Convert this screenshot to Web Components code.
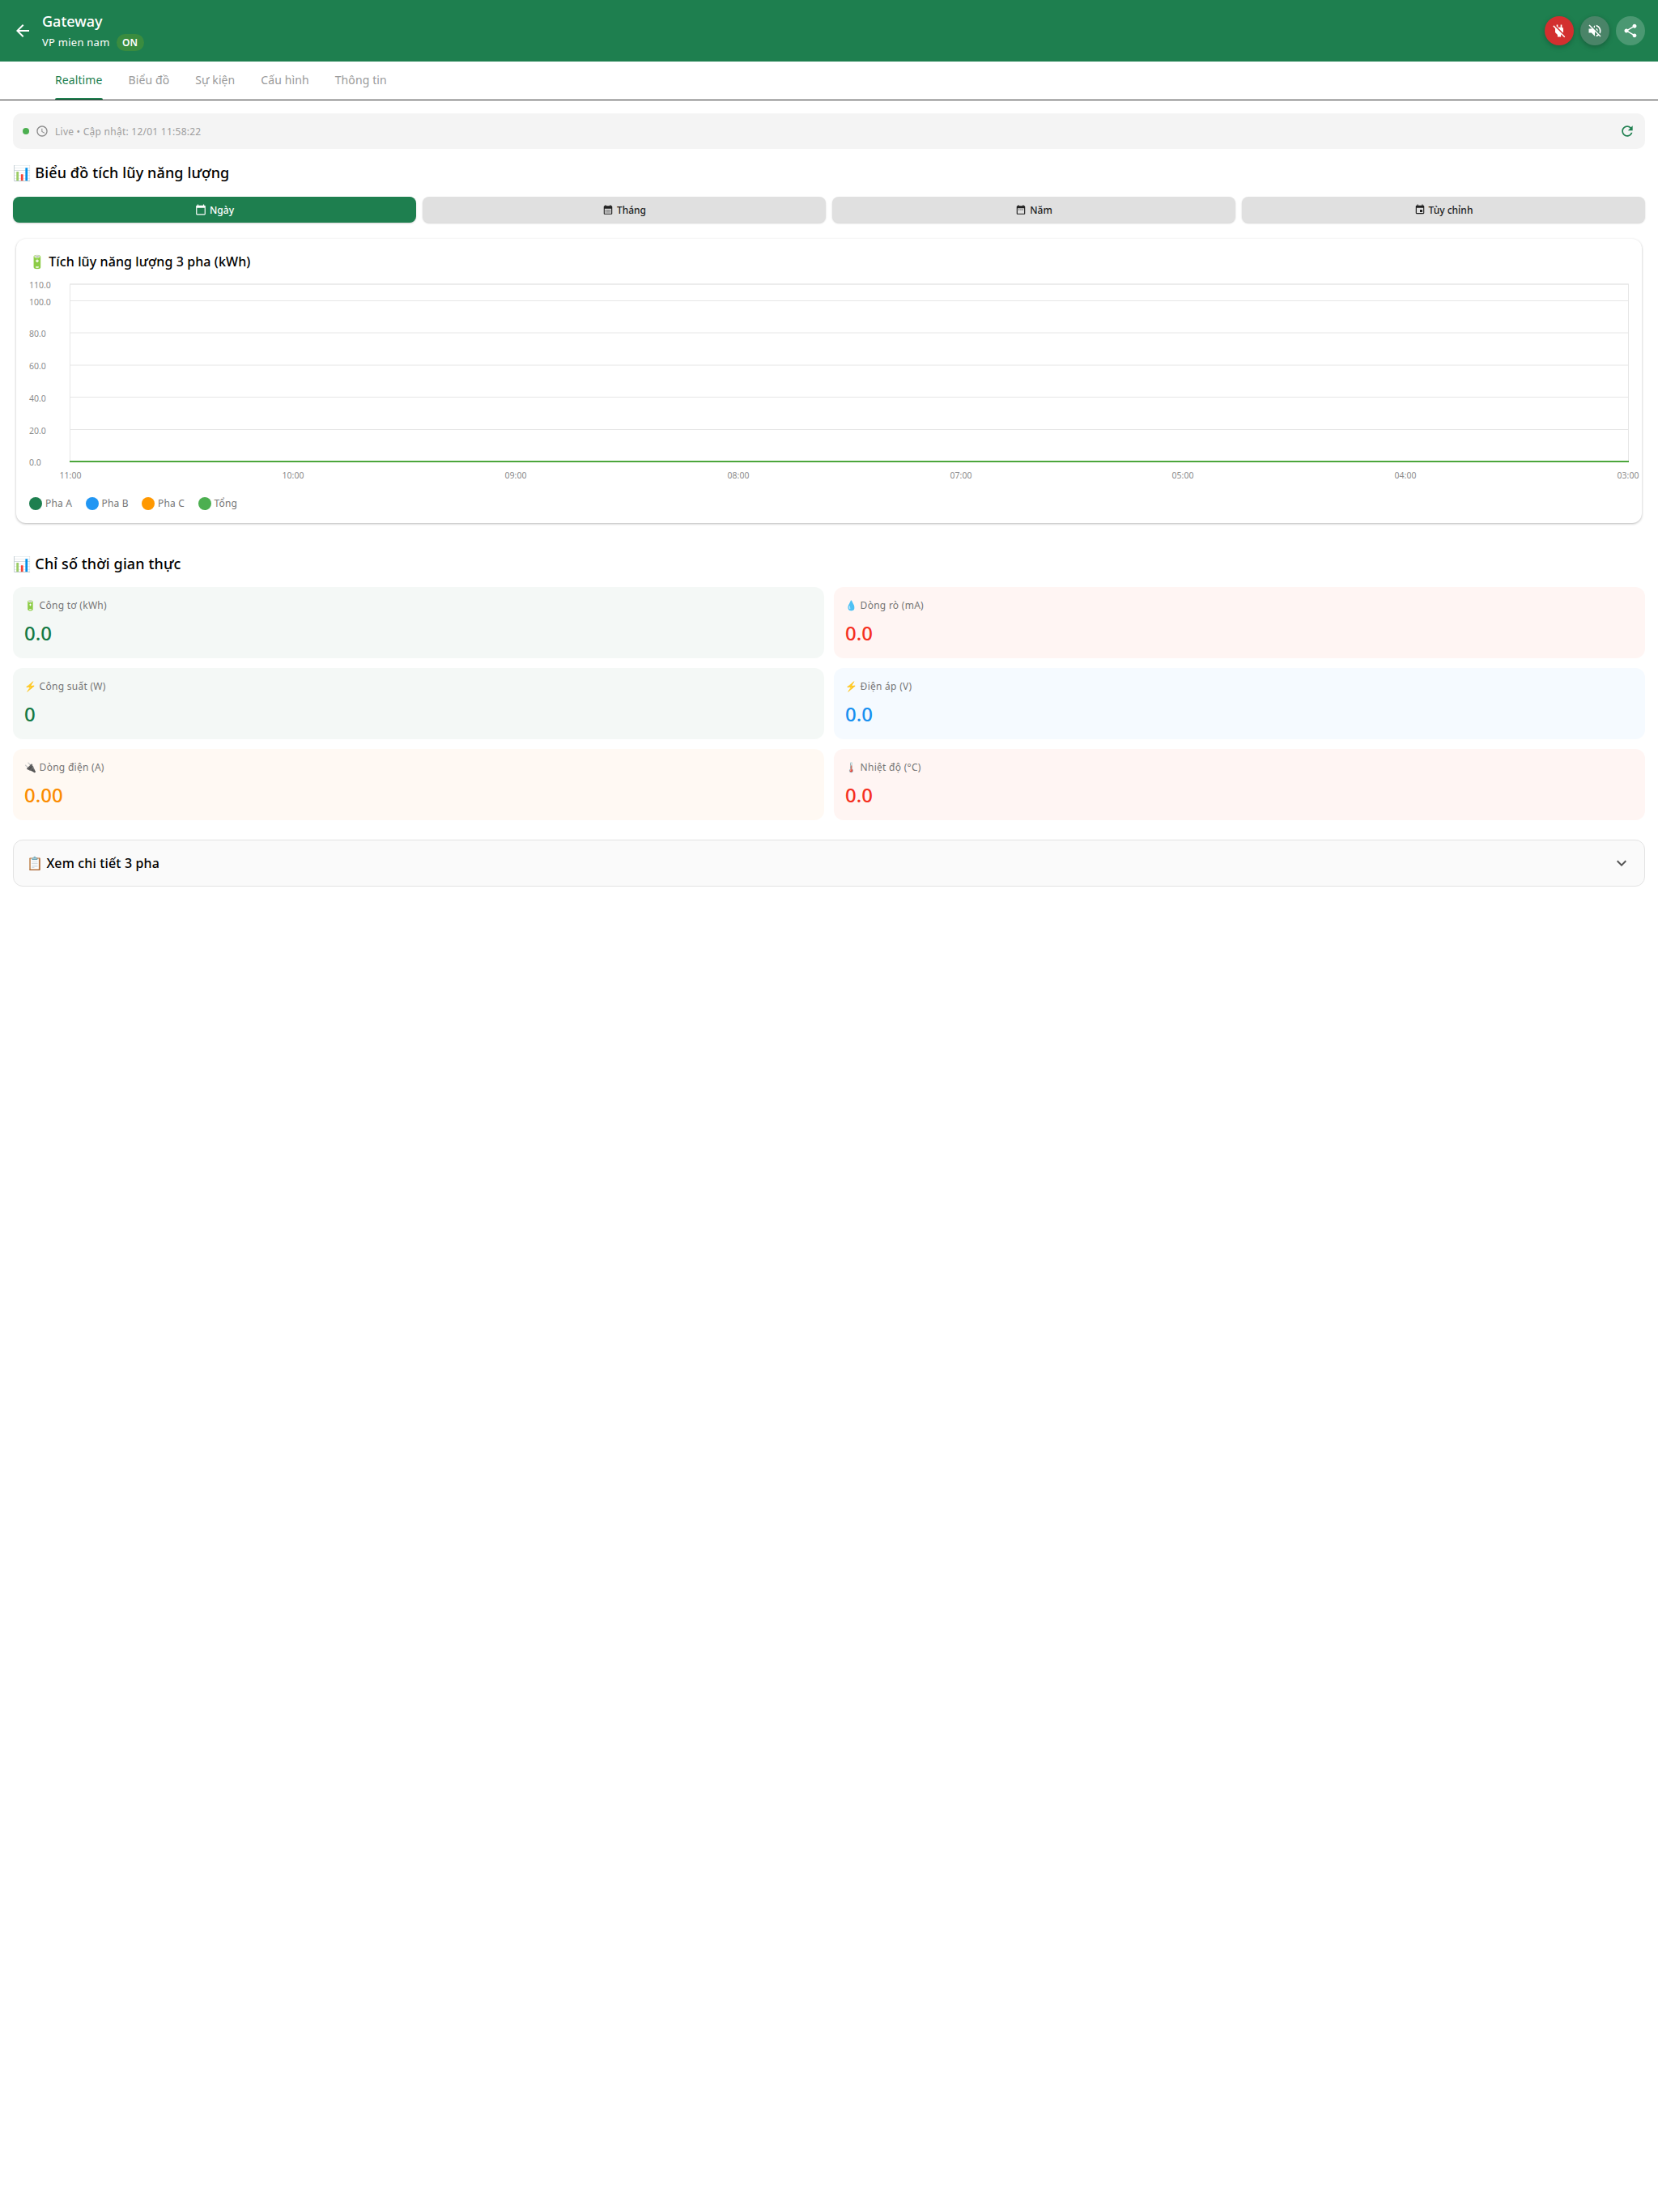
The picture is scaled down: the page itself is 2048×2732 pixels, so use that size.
<!DOCTYPE html>
<html lang="vi"><head><meta charset="utf-8"><title>Gateway</title>
<style>
html,body{margin:0;padding:0;background:#fff;font-family:"Noto Sans","Noto Color Emoji",sans-serif;color:#111}
body{min-height:2732px}
</style></head><body>
<app-header title-text="Gateway" sub="VP mien nam" status="ON"></app-header>
<app-tabs></app-tabs>
<main-view></main-view>
<script>
const P={
 back:'M20 11H7.83l5.59-5.59L12 4l-8 8 8 8 1.41-1.41L7.83 13H20v-2z',
 poweroff:'M18 14.49V9c0-1-1.01-2.01-2-2V3h-2v4h-4V3H8v2.48l9.51 9.5.49-.49zm-1.76 1.77L7.2 7.2l-.01.01L3.98 4 2.71 5.25l3.36 3.36C6.04 8.74 6 8.87 6 9v5.48L9.5 18v3h5v-3l.48-.48L19.45 22l1.26-1.28-4.47-4.46z',
 voloff:'M16.5 12c0-1.77-1.02-3.29-2.5-4.03v2.21l2.45 2.45c.03-.2.05-.41.05-.63zm2.5 0c0 .94-.2 1.82-.54 2.64l1.51 1.51C20.63 14.91 21 13.5 21 12c0-4.28-2.99-7.86-7-8.77v2.06c2.89.86 5 3.54 5 6.71zM4.27 3 3 4.27 7.73 9H3v6h4l5 5v-6.73l4.25 4.25c-.67.52-1.42.93-2.25 1.18v2.06c1.38-.31 2.63-.95 3.69-1.81L19.73 21 21 19.73l-9-9L4.27 3zM12 4 9.91 6.09 12 8.18V4z',
 share:'M18 16.08c-.76 0-1.44.3-1.96.77L8.91 12.7c.05-.23.09-.46.09-.7s-.04-.47-.09-.7l7.05-4.11c.54.5 1.25.81 2.04.81 1.66 0 3-1.34 3-3s-1.34-3-3-3-3 1.34-3 3c0 .24.04.47.09.7L8.04 9.81C7.5 9.31 6.79 9 6 9c-1.66 0-3 1.34-3 3s1.34 3 3 3c.79 0 1.5-.31 2.04-.81l7.12 4.16c-.05.21-.08.43-.08.65 0 1.61 1.31 2.92 2.92 2.92s2.92-1.31 2.92-2.92-1.31-2.92-2.92-2.92z',
 refresh:'M17.65 6.35C16.2 4.9 14.21 4 12 4c-4.42 0-7.99 3.58-7.99 8s3.57 8 7.99 8c3.73 0 6.84-2.55 7.73-6h-2.08c-.82 2.33-3.04 4-5.65 4-3.31 0-6-2.69-6-6s2.69-6 6-6c1.66 0 3.14.69 4.22 1.78L13 11h7V4l-2.35 2.35z',
 clock:'M11.99 2C6.47 2 2 6.48 2 12s4.47 10 9.99 10C17.52 22 22 17.52 22 12S17.52 2 11.99 2zM12 20c-4.42 0-8-3.58-8-8s3.58-8 8-8 8 3.58 8 8-3.58 8-8 8zm.5-13H11v6l5.25 3.15.75-1.23-4.5-2.67z',
 today:'M20 3h-1V1h-2v2H7V1H5v2H4c-1.1 0-2 .9-2 2v16c0 1.1.9 2 2 2h16c1.1 0 2-.9 2-2V5c0-1.1-.9-2-2-2zm0 18H4V8h16v13z',
 month:'M19 4h-1V2h-2v2H8V2H6v2H5c-1.1 0-2 .9-2 2v14c0 1.1.9 2 2 2h14c1.1 0 2-.9 2-2V6c0-1.1-.9-2-2-2zm0 16H5V10h14v10zM9 14H7v-2h2v2zm4 0h-2v-2h2v2zm4 0h-2v-2h2v2zm-8 4H7v-2h2v2zm4 0h-2v-2h2v2zm4 0h-2v-2h2v2z',
 year:'M9 11H7v2h2v-2zm4 0h-2v2h2v-2zm4 0h-2v2h2v-2zm2-7h-1V2h-2v2H8V2H6v2H5c-1.11 0-1.99.9-1.99 2L3 20c0 1.1.89 2 2 2h14c1.1 0 2-.9 2-2V6c0-1.1-.9-2-2-2zm0 16H5V9h14v11z',
 event:'M17 12h-5v5h5v-5zM16 1v2H8V1H6v2H5c-1.11 0-1.99.9-1.99 2L3 19c0 1.1.89 2 2 2h14c1.1 0 2-.9 2-2V5c0-1.1-.9-2-2-2h-1V1h-2zm3 18H5V8h14v11z',
 more:'M16.59 8.59 12 13.17 7.41 8.59 6 10l6 6 6-6z'
};
const icon=(n,s,c='currentColor')=>`<svg width="${s}" height="${s}" viewBox="0 0 24 24" fill="${c}" style="display:block;flex:none"><path d="${P[n]}"/></svg>`;
const FONT='"Noto Sans","Noto Color Emoji",sans-serif';
class Base extends HTMLElement{
  render(html){(this.shadowRoot||this.attachShadow({mode:'open'})).innerHTML=html;}
}
class AppHeader extends Base{connectedCallback(){this.render(`<style>
:host{display:flex;align-items:center;height:76px;background:#1e7f4f;color:#fff;padding:0 16px;box-sizing:border-box;font-family:${FONT}}
.back{margin-right:12px}
.txt{flex:1;display:flex;flex-direction:column;gap:4px}
.t{font-size:18px;font-weight:500;line-height:24px}
.s{display:flex;align-items:center;gap:8px;font-size:13px;letter-spacing:.25px;line-height:21px}
.b{background:#3a8c3f;border-radius:11px;font-size:12px;font-weight:600;letter-spacing:0;padding:0 7.5px;line-height:21px}
.acts{display:flex;gap:8px}
</style><div class="back">${icon('back',24)}</div>
<div class="txt"><div class="t">${this.getAttribute('title-text')}</div><div class="s"><span>${this.getAttribute('sub')}</span><span class="b">${this.getAttribute('status')}</span></div></div>
<div class="acts"><icon-btn name="poweroff" bg="#d32f2f" shadow></icon-btn><icon-btn name="voloff" bg="#4a8468" shadow></icon-btn><icon-btn name="share" bg="rgba(255,255,255,.2)"></icon-btn></div>`);}}
class IconBtn extends Base{connectedCallback(){const sh=this.hasAttribute('shadow');this.render(`<style>
:host{display:flex;width:36px;height:36px;border-radius:50%;align-items:center;justify-content:center;color:#fff;background:${this.getAttribute('bg')};${sh?'box-shadow:0 2px 6px rgba(0,0,0,.25);':''}}
</style>${icon(this.getAttribute('name'),20)}`);}}
class AppTabs extends Base{connectedCallback(){const tabs=['Realtime','Biểu đồ','Sự kiện','Cấu hình','Thông tin'];this.render(`<style>
:host{display:flex;height:48px;box-sizing:border-box;border-bottom:1.5px solid #333;padding-left:52px;font-family:${FONT};font-size:14px;letter-spacing:.1px;color:#9a9a9a}
div{position:relative;padding:0 16px;line-height:46px;white-space:nowrap}
.a{color:#1e7f4f}
.a::after{content:"";position:absolute;left:16px;right:16px;bottom:0;height:2.5px;background:#1e7f4f;border-radius:2px 2px 0 0}
</style>${tabs.map((t,i)=>`<div class="${i?'':'a'}">${t}</div>`).join('')}`);}}
class StatusBar extends Base{connectedCallback(){this.render(`<style>
:host{display:flex;align-items:center;height:44px;background:#f4f4f4;border-radius:10px;padding:0 12px;box-sizing:border-box;font-size:12px;letter-spacing:.25px;color:#9e9e9e}
.d{width:8px;height:8px;border-radius:50%;background:#4caf50;margin-right:8px}
.x{flex:1;margin-left:8px}
</style><span class="d"></span>${icon('clock',16,'#8a8a8a')}<span class="x"><slot></slot></span>${icon('refresh',20,'#1e7f4f')}`);}}
class SecTitle extends Base{connectedCallback(){this.render(`<style>
:host{display:block;font-size:18px;font-weight:500;letter-spacing:.12px;line-height:24px;color:#000}
</style><slot></slot>`);}}
class RangeBtn extends Base{connectedCallback(){const a=this.hasAttribute('active');this.render(`<style>
:host{display:flex;align-items:center;justify-content:center;gap:4px;height:32px;border-radius:8px;font-size:12px;font-weight:500;
background:${a?'#1e7f4f':'#e0e0e0'};color:${a?'#fff':'#222'};box-shadow:0 1px 2px rgba(0,0,0,.18)}
</style>${icon(this.getAttribute('icon'),14)}<slot></slot>`);}}
class EnergyChart extends Base{connectedCallback(){
 const L=86.5,R=2011.5;
 const ys=[[110,351],[100,371.5],[80,411],[60,451],[40,490.5],[20,530.5],[0,570]];
 const xs=[['11:00',87],['10:00',362],['09:00',637],['08:00',912],['07:00',1187],['05:00',1461],['04:00',1736],['03:00',2011]];
 const svg=`<svg width="2008" height="256" viewBox="20 345 2008 256" style="display:block" font-size="10.5" fill="#8c8c8c" font-family='${FONT}'>
 <rect x="${L}" y="351" width="${R-L}" height="219" fill="none" stroke="#e6e6e6" stroke-width="1"/>
 ${ys.map(([v,y])=>`<line x1="${L}" x2="${R}" y1="${y}" y2="${y}" stroke="#e6e6e6"/><text x="36" y="${y+5}">${v.toFixed(1)}</text>`).join('')}
 <line x1="86" x2="${R+.5}" y1="570" y2="570" stroke="#4ca63c" stroke-width="2"/>
 ${xs.map(([t,x])=>`<text x="${x}" y="591" text-anchor="middle">${t}</text>`).join('')}
 </svg>`;
 const lg=[['Pha A','#1e7f4f'],['Pha B','#2196f3'],['Pha C','#ff9800'],['Tổng','#4caf50']];
 this.render(`<style>
:host{display:block;margin:0 4px;border-radius:12px;background:#fff;box-shadow:0 1px 3px rgba(0,0,0,.28);font-family:${FONT};height:351px;box-sizing:border-box;padding-top:17px}
h3{margin:0 0 11px;padding-left:16px;font-size:16px;font-weight:500;letter-spacing:.1px;line-height:22px;color:#000}
.lg{display:flex;margin:13px 0 0 16px;gap:8px;font-size:12px;letter-spacing:.2px;color:#757575;line-height:16px}
.i{display:flex;align-items:center;gap:4px;width:61.5px}
.i b{width:16px;height:16px;border-radius:50%;flex:none}
</style><h3>🔋 Tích lũy năng lượng 3 pha (kWh)</h3>${svg}
<div class="lg">${lg.map(([t,c])=>`<span class="i"><b style="background:${c}"></b>${t}</span>`).join('')}</div>`);}}
class MetricCard extends Base{connectedCallback(){this.render(`<style>
:host{display:block;height:88px;border-radius:12px;box-sizing:border-box;padding:14px;background:${this.getAttribute('bg')}}
.l{font-size:12px;letter-spacing:.27px;line-height:18px;color:#757575}
.v{font-size:24px;font-weight:500;line-height:32px;margin-top:9px;color:${this.getAttribute('color')}}
</style><div class="l">${this.getAttribute('label')}</div><div class="v">${this.getAttribute('value')}</div>`);}}
class Accordion extends Base{connectedCallback(){this.render(`<style>
:host{display:flex;align-items:center;height:58px;box-sizing:border-box;border:1.5px solid #e3e3e3;border-radius:12px;background:#fafafa;padding:0 16px;font-size:16px;font-weight:500;letter-spacing:.15px;color:#000}
span{flex:1}
</style><span><slot></slot></span><span style="flex:none;color:#555">${icon('more',24)}</span>`);}}
class MainView extends Base{connectedCallback(){
 const rows=[['🔋 Công tơ (kWh)','0.0','#f4f8f6','#157a45'],['💧 Dòng rò (mA)','0.0','#fff5f3','#f5301f'],['⚡ Công suất (W)','0','#f4f8f6','#157a45'],['⚡ Điện áp (V)','0.0','#f5faff','#1890f0'],['🔌 Dòng điện (A)','0.00','#fff9f3','#fb8c00'],['🌡️ Nhiệt độ (°C)','0.0','#fff5f3','#f5301f']];
 this.render(`<style>
:host{display:block;padding:16px;font-family:${FONT}}
.r{display:grid;grid-template-columns:repeat(4,1fr);gap:8px;margin:18px 0 20px}
.m{display:grid;grid-template-columns:1fr 1fr;gap:12px;margin:17px 0 24px}
status-bar+sec-title{margin-top:17px}
energy-chart+sec-title{margin-top:38px}
</style>
<status-bar>Live • Cập nhật: 12/01 11:58:22</status-bar>
<sec-title>📊 Biểu đồ tích lũy năng lượng</sec-title>
<div class="r"><range-btn icon="today" active>Ngày</range-btn><range-btn icon="month">Tháng</range-btn><range-btn icon="year">Năm</range-btn><range-btn icon="event">Tùy chỉnh</range-btn></div>
<energy-chart></energy-chart>
<sec-title>📊 Chỉ số thời gian thực</sec-title>
<div class="m">${rows.map(r=>`<metric-card label="${r[0]}" value="${r[1]}" bg="${r[2]}" color="${r[3]}"></metric-card>`).join('')}</div>
<detail-accordion>📋 Xem chi tiết 3 pha</detail-accordion>`);}}
[['app-header',AppHeader],['icon-btn',IconBtn],['app-tabs',AppTabs],['status-bar',StatusBar],['sec-title',SecTitle],['range-btn',RangeBtn],['energy-chart',EnergyChart],['metric-card',MetricCard],['detail-accordion',Accordion],['main-view',MainView]].forEach(([n,c])=>customElements.define(n,c));
</script>
</body></html>
